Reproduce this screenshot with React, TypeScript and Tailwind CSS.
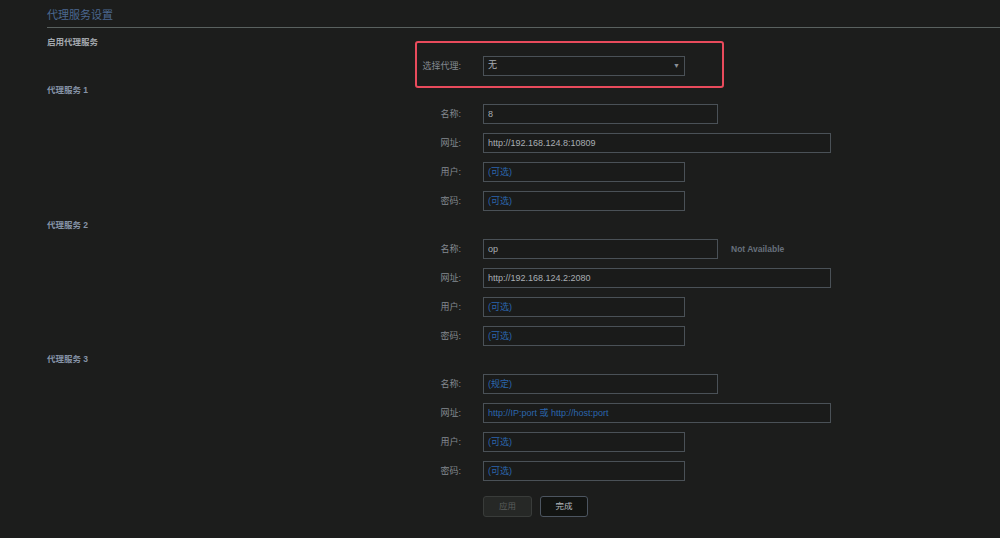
const font = { fontFamily: '"Liberation Sans", "Noto Sans CJK SC", sans-serif' };

type Field = { label: string; value?: string; placeholder?: string; width: string; note?: string };

const Row = ({ label, value, placeholder, width, note }: Field) => (
  <div className="flex items-center h-[20px]">
    <div className="w-[414px] text-right text-[9px] leading-[12px] text-[#838990]">{label}:</div>
    <input
      className={`ml-[22px] h-[20px] ${width} border border-[#4a5157] bg-[#1a1b1a] px-[4px] text-[9px] text-[#a9aeb3] outline-none placeholder:text-[#2b66ad]`}
      style={font}
      defaultValue={value}
      placeholder={placeholder}
      readOnly
    />
    {note && <span className="ml-[13px] text-[8.5px] font-bold text-[#67707b]">{note}</span>}
  </div>
);

const Heading = ({ children, className }: { children: React.ReactNode; className?: string }) => (
  <div className={`text-[8.5px] leading-[12px] font-semibold ${className ?? ''}`}>{children}</div>
);

const Section = ({ rows, className }: { rows: Field[]; className?: string }) => (
  <div className={`flex flex-col gap-[9px] ${className ?? 'mt-[8px]'}`}>
    {rows.map((r) => (
      <Row key={r.label} {...r} />
    ))}
  </div>
);

const optional = '(可选)';

export default function App() {
  return (
    <div className="min-h-[538px] w-[1000px] bg-[#1c1d1c] pl-[47px]" style={font}>
      <div className="h-[27px] pt-[8px] text-[11px] leading-[14px] text-[#4b6890]">代理服务设置</div>
      <div className="h-px bg-[#59615f]" />

      <Heading className="mt-[8px] text-[#a3a8ae]">启用代理服务</Heading>
      <div className="relative mt-[8px] flex items-center h-[20px]">
        <div className="w-[414px] text-right text-[9px] leading-[12px] text-[#838990]">选择代理:</div>
        <div className="ml-[22px] flex h-[20px] w-[202px] items-center justify-between border border-[#4a5157] bg-[#1a1b1a] pl-[4px] pr-[4px] text-[9px] text-[#a9aeb3]">
          <span>无</span>
          <span className="text-[7px] text-[#8a9096]">▼</span>
        </div>
        <div className="absolute left-[368px] -top-[15px] h-[47px] w-[309px] rounded-[3px] border-2 border-[#e94b5c]" />
      </div>

      <Heading className="mt-[8px] text-[#8593a7]">代理服务 1</Heading>
      <Section
        rows={[
          { label: '名称', value: '8', width: 'w-[235px]' },
          { label: '网址', value: 'http://192.168.124.8:10809', width: 'w-[348px]' },
          { label: '用户', placeholder: optional, width: 'w-[202px]' },
          { label: '密码', placeholder: optional, width: 'w-[202px]' },
        ]}
      />

      <Heading className="mt-[8px] text-[#8593a7]">代理服务 2</Heading>
      <Section
        rows={[
          { label: '名称', value: 'op', width: 'w-[235px]', note: 'Not Available' },
          { label: '网址', value: 'http://192.168.124.2:2080', width: 'w-[348px]' },
          { label: '用户', placeholder: optional, width: 'w-[202px]' },
          { label: '密码', placeholder: optional, width: 'w-[202px]' },
        ]}
      />

      <Heading className="mt-[7px] text-[#8593a7]">代理服务 3</Heading>
      <Section
        className="mt-[9px]"
        rows={[
          { label: '名称', placeholder: '(规定)', width: 'w-[235px]' },
          { label: '网址', placeholder: 'http://IP:port 或 http://host:port', width: 'w-[348px]' },
          { label: '用户', placeholder: optional, width: 'w-[202px]' },
          { label: '密码', placeholder: optional, width: 'w-[202px]' },
        ]}
      />

      <div className="mt-[15px] flex gap-[8px] pl-[436px] pb-[21px]">
        <button className="h-[21px] w-[49px] rounded-[3px] border border-[#393c3a] bg-[#262826] text-[8.5px] text-[#5a5e5c]">
          应用
        </button>
        <button className="h-[21px] w-[48px] rounded-[3px] border border-[#4c5560] bg-[#121412] text-[8.5px] text-[#b2b7bc]">
          完成
        </button>
      </div>
    </div>
  );
}
